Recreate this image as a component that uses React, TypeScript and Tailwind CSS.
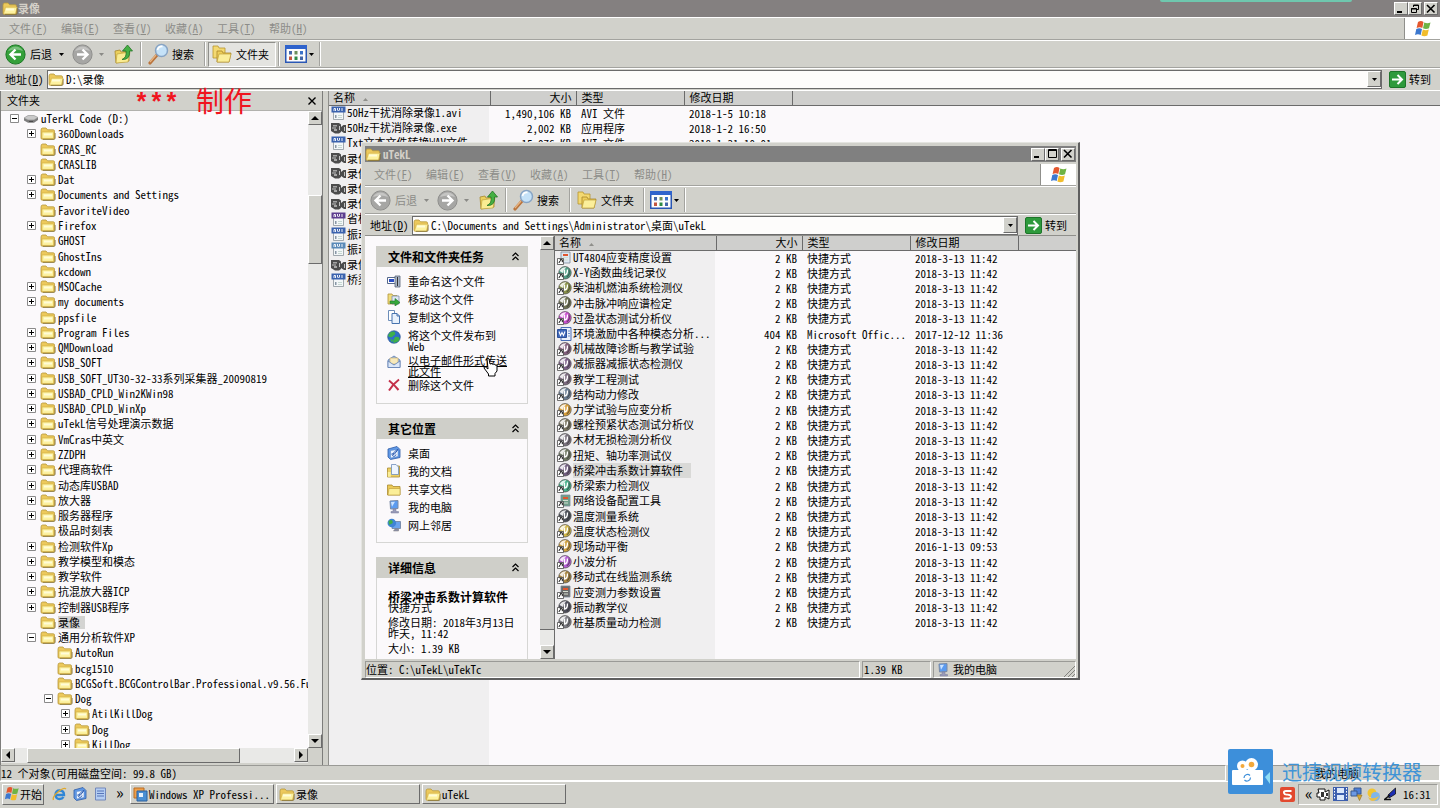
import type { ReactNode } from 'react'
import clsx from 'clsx'

const RAISED =
  'border border-t-white border-l-white border-r-[#6b6b6b] border-b-[#6b6b6b] bg-[#d1d1cb]'
const SUNKEN =
  'border border-t-[#9a9a96] border-l-[#9a9a96] border-r-white border-b-white'

const MENUS = ['文件(F)', '编辑(E)', '查看(V)', '收藏(A)', '工具(T)', '帮助(H)']

type Expand = '+' | '-' | ''

interface TreeNode {
  name: string
  level: number
  expand: Expand
  selected?: boolean
}

const node = (name: string, expand: Expand = '', level = 1, selected = false): TreeNode => ({
  name,
  level,
  expand,
  selected,
})

const TREE: TreeNode[] = [
  node('uTerkL Code (D:)', '-', 0),
  node('360Downloads', '+'),
  node('CRAS_RC'),
  node('CRASLIB'),
  node('Dat', '+'),
  node('Documents and Settings', '+'),
  node('FavoriteVideo'),
  node('Firefox', '+'),
  node('GHOST'),
  node('GhostIns'),
  node('kcdown'),
  node('MSOCache', '+'),
  node('my documents', '+'),
  node('ppsfile'),
  node('Program Files', '+'),
  node('QMDownload', '+'),
  node('USB_SOFT', '+'),
  node('USB_SOFT_UT30-32-33系列采集器_20090819', '+'),
  node('USBAD_CPLD_Win2KWin98', '+'),
  node('USBAD_CPLD_WinXp', '+'),
  node('uTekL信号处理演示数据', '+'),
  node('VmCras中英文', '+'),
  node('ZZDPH', '+'),
  node('代理商软件', '+'),
  node('动态库USBAD', '+'),
  node('放大器', '+'),
  node('服务器程序', '+'),
  node('极品时刻表'),
  node('检测软件Xp', '+'),
  node('教学模型和模态', '+'),
  node('教学软件', '+'),
  node('抗混放大器ICP', '+'),
  node('控制器USB程序', '+'),
  node('录像', '', 1, true),
  node('通用分析软件XP', '-'),
  node('AutoRun', '', 2),
  node('bcg1510', '', 2),
  node('BCGSoft.BCGControlBar.Professional.v9.56.Full', '', 2),
  node('Dog', '-', 2),
  node('AtilKillDog', '+', 3),
  node('Dog', '+', 3),
  node('KillDog', '+', 3),
]

const INDENT = ['pl-[9px]', 'pl-[26px]', 'pl-[43px]', 'pl-[60px]']

interface FileRow {
  icon: ReactNode
  name: string
  size: string
  type: string
  date: string
  selected?: boolean
}

/* ---------- icons ---------- */

function Folder({ open = false }: { open?: boolean }) {
  return (
    <svg className="h-[13px] w-4 shrink-0" viewBox="0 0 16 13">
      <path d="M1 3.2Q1 1 2.6 1H6l1.6 1.8h5.6q1.3 0 1.3 1.3V11q0 1.2-1.2 1.2H2.2Q1 12.200 1 11z" fill="#ecc95c" stroke="#b6983c" strokeWidth=".8" />
      <path d={open ? 'M3.500 5.200h11.700l-1.800 6.800H1.500z' : 'M2 5h11.600v6.400H2z'} fill="#fdf2a0" stroke="#d0ab42" strokeWidth=".6" />
      <path d="M4 6.500h8v2H4z" fill="#fffcd8" />
      <path d="M3 12.400h11.200q1-.3 1-1.400V6" fill="none" stroke="#7d6c34" strokeWidth=".7" />
    </svg>
  )
}

function Drive() {
  return (
    <svg className="h-[13px] w-4 shrink-0" viewBox="0 0 16 13">
      <path d="M1 6l4-2.500h6l4 2-4 2.500H5z" fill="#c9c9c9" stroke="#8b8b8b" strokeWidth=".6" />
      <path d="M1 6l4 2h6l4-2.500v2.600L11 10.800H5L1 8.500z" fill="#7d7d7d" />
      <path d="M6 9h4v1H6z" fill="#4a4a4a" />
    </svg>
  )
}

function NavArrow({ dir, green }: { dir: 'left' | 'right'; green?: boolean }) {
  return (
    <svg className="size-[21px] shrink-0" viewBox="0 0 21 21">
      <circle cx="10.500" cy="10.500" r="9.600" fill={green ? '#35a03a' : '#a6a6a4'} stroke={green ? '#1d7a26' : '#8f8f8d'} />
      <path d="M3 7a8.500 8.500 0 0 1 15 0q-7-3-15 0z" fill="#fff" opacity=".35" />
      <path
        d={dir === 'left' ? 'M16 10.500H6M10.500 5.500l-5 5 5 5' : 'M5 10.500h10M10.500 5.500l5 5-5 5'}
        fill="none"
        stroke="#fff"
        strokeWidth="2.400"
      />
    </svg>
  )
}

function UpFolder() {
  return (
    <svg className="size-5 shrink-0" viewBox="0 0 20 20">
      <path d="M1 7l5-1 1 2 8-1v10l-13 2z" fill="#ecd05c" stroke="#a8892c" strokeWidth=".8" />
      <path d="M3 10l13-2-2 10-12 1z" fill="#faec92" stroke="#b99a35" strokeWidth=".6" />
      <path d="M8 15.500q5-2 4-8.500H8.500l5-6 5 6h-3q1 9-7.500 8.500z" fill="#46b044" stroke="#237326" strokeWidth=".8" />
    </svg>
  )
}

function SearchIcon() {
  return (
    <svg className="size-[22px] shrink-0" viewBox="0 0 22 22">
      <path d="M2 20l7-8" stroke="#b9743d" strokeWidth="3.200" strokeLinecap="round" />
      <path d="M2 19l6-7" stroke="#e7b583" strokeWidth="1.200" />
      <circle cx="13.500" cy="7.500" r="6" fill="#c5e2f8" stroke="#87a4c4" strokeWidth="1.500" />
      <path d="M9.500 7q1-4 5-3.500" fill="none" stroke="#fff" strokeWidth="1.800" />
    </svg>
  )
}

function FoldersIcon() {
  return (
    <svg className="size-5 shrink-0" viewBox="0 0 20 20">
      <path d="M1 2h5l1 2h6v10H1z" fill="#f3d971" stroke="#b6962f" strokeWidth=".8" />
      <path d="M5 7h5l1 2h8l-2 9H5z" fill="#eecf5a" stroke="#a8872b" strokeWidth=".8" />
      <path d="M7 10h12l-2 8H5z" fill="#fbee9a" stroke="#b6962f" strokeWidth=".6" />
    </svg>
  )
}

function ViewsIcon() {
  return (
    <svg className="h-[18px] w-[22px] shrink-0" viewBox="0 0 22 18">
      <path d="M.75.75h20.500v16.500H.75z" fill="#fdfdfd" stroke="#2a57b4" strokeWidth="1.500" />
      <path d="M0 0h22v4H0z" fill="#2f63cc" />
      <path d="M4 6h3v3.500H4zM15 11.500h3V15h-3z" fill="#4467a8" />
      <path d="M9.500 6h3v3.500h-3z" fill="#6d8f5a" />
      <path d="M15 6h3v3.500h-3z" fill="#3b72c9" />
      <path d="M4 11.500h3V15H4z" fill="#c3553f" />
      <path d="M9.500 11.500h3V15h-3z" fill="#2e8b45" />
    </svg>
  )
}

function Flag({ size = 'size-[18px]' }: { size?: string }) {
  return (
    <svg className={clsx('shrink-0', size)} viewBox="0 0 18 18">
      <path d="M4 2q3-2 5.500 0L8.300 8Q6 6.300 2.600 8z" fill="#e4572e" />
      <path d="M10.300 2.400q3 1.600 6.200 0L15 8.300q-3 1.600-6 0z" fill="#6fb344" />
      <path d="M2.300 9q3-1.700 5.700 0l-1.300 6Q4 13.400 1 15z" fill="#3c78cf" />
      <path d="M8.800 9.400q3 1.600 6 0L13.400 15.400q-3 1.500-6 0z" fill="#f2bd2b" />
    </svg>
  )
}

function GoIcon() {
  return (
    <svg className="size-[17px] shrink-0" viewBox="0 0 17 17">
      <rect x=".5" y=".5" width="16" height="16" rx="1.500" fill="#2e9a3c" stroke="#1d7529" />
      <path d="M3 8.500h10M8.500 4l4.500 4.500L8.500 13" fill="none" stroke="#fff" strokeWidth="2" />
    </svg>
  )
}

function Clip({ tone }: { tone: string }) {
  return (
    <svg className="h-[14px] w-[15px] shrink-0" viewBox="0 0 15 14">
      <path d="M2.500 4h10v9.500h-10z" fill="#f3f6f8" stroke="#8b949c" strokeWidth=".8" />
      <path d="M.5.500h14v6H.5z" fill={tone} />
      <path d="M3 5V2.500h1.500V5M6.500 2v2l1 1 1-1V2M11 2v3" stroke="#fff" strokeWidth=".9" fill="none" />
      <path d="M4 9h1.500v3H4z" fill="#8796a5" />
      <path d="M7 9.500h4M7 11.500h4" stroke="#b9cfc6" strokeWidth=".8" />
    </svg>
  )
}

function Camera() {
  return (
    <svg className="h-[14px] w-[15px] shrink-0" viewBox="0 0 15 14">
      <path d="M0 2h8l2 1.500V6l2.500-2H15v8h-2l-3-2v1l-2 1.500H4L0 10z" fill="#4c4c4c" />
      <path d="M2 4h4v1.500H2zM3 8h3v2H3z" fill="#a5a5a5" />
      <path d="M1 7h4M8.500 5v4M13.500 6v4" stroke="#d0d0d0" strokeWidth=".9" />
    </svg>
  )
}

function Gauge({ color }: { color: string }) {
  return (
    <svg className="h-[14px] w-[15px] shrink-0" viewBox="0 0 15 14">
      <circle cx="8" cy="6.800" r="6.200" fill={color} stroke="#4a4a4a" strokeWidth=".7" />
      <path d="M2.500 5Q4.500 .8 9.500 1.200 6.500 3 6 7z" fill="#fff" opacity=".85" />
      <path d="M7.500 3.500v5.500q3 0 3-5.500" fill="none" stroke="#fff" strokeWidth="1.400" />
      <path d="M11.800 3.500q2 4-2 7.500" fill="none" stroke="#333" strokeWidth="1.200" opacity=".6" />
      <path d="M.5 7.500h6v6h-6z" fill="#fff" stroke="#333" strokeWidth=".7" />
      <path d="M2 12q0-2 2-2.500M2.800 8.700h2.500v2.500" fill="none" stroke="#111" />
    </svg>
  )
}

function SmallApp({ color }: { color: string }) {
  return (
    <svg className="h-[14px] w-[15px] shrink-0" viewBox="0 0 15 14">
      <path d="M4 1h9v11H4z" fill={color} stroke="#7b8a99" strokeWidth=".8" />
      <path d="M6 6.500h5M6 9h5" stroke="#d5ded0" />
      <path d="M6 3h5v2H6z" fill="#e0552f" />
      <path d="M.5 7.500h6v6h-6z" fill="#fff" stroke="#333" strokeWidth=".7" />
      <path d="M2 12q0-2 2-2.500M2.800 8.700h2.500v2.500" fill="none" stroke="#111" />
    </svg>
  )
}

function WordIcon() {
  return (
    <svg className="h-[14px] w-[15px] shrink-0" viewBox="0 0 15 14">
      <path d="M4 .5h10v13H4z" fill="#e9f0fb" stroke="#4a6db5" />
      <path d="M.5 2.500h9v8h-9z" fill="#3f68ba" stroke="#2c4f98" />
      <path d="M2 4.500l1.500 4L5 5.500l1.500 3 1.500-4" fill="none" stroke="#fff" strokeWidth="1.100" />
      <path d="M11 4h2M11 6.500h2M11 9h2" stroke="#6f8fcb" />
    </svg>
  )
}

function TaskIcon({ kind }: { kind: string }) {
  return (
    <svg className="size-[14px] shrink-0" viewBox="0 0 14 14">
      {kind === 'rename' && (
        <>
          <path d="M.5 3.500h9v6h-9z" fill="#fff" stroke="#55678a" />
          <path d="M2 5h5v3H2z" fill="#2a4cc4" />
          <path d="M8 2h5v11H8z" fill="#a8b4c6" stroke="#5a6678" strokeWidth=".8" />
          <path d="M10.500 3v9" stroke="#333" />
        </>
      )}
      {kind === 'move' && (
        <>
          <path d="M1 2h4l1 1.500h4V12H1z" fill="#f0dc7c" stroke="#b2963a" strokeWidth=".8" />
          <path d="M5 4h7v8H5z" fill="#dfe8f5" stroke="#7f8ea8" strokeWidth=".8" />
          <path d="M3 9h5V6.500l5 4-5 3.500v-2.500H3z" fill="#35a83b" stroke="#1f7326" strokeWidth=".6" />
        </>
      )}
      {kind === 'copy' && (
        <>
          <path d="M1.500.500h6v10h-6z" fill="#fff" stroke="#6d8db9" />
          <path d="M5 3.500h5l2.500 2.500v7.500H5z" fill="#e8f1fc" stroke="#4773ae" />
          <path d="M10 3.500V6h2.500" fill="none" stroke="#4773ae" />
        </>
      )}
      {kind === 'web' && (
        <>
          <circle cx="7" cy="7" r="6.300" fill="#2f6fc7" stroke="#214a85" strokeWidth=".6" />
          <path d="M3 2.500q4-2 5 0T6 6q-1 2-3.500 1T2 4zM8 7q4-1 4.500 1.500T8.500 12.500 8 7zM3 9l3 1-1 2.500z" fill="#3eb04a" />
        </>
      )}
      {kind === 'mail' && (
        <>
          <path d="M1 5l6-4 6 4v7.500H1z" fill="#9db9e2" stroke="#5f7fb2" strokeWidth=".8" />
          <path d="M3 3h8v6H3z" fill="#f7e9bb" stroke="#c8a763" strokeWidth=".6" />
          <path d="M1 6l6 4 6-4v6.500H1z" fill="#dbe7f8" stroke="#5f7fb2" strokeWidth=".8" />
        </>
      )}
      {kind === 'delete' && <path d="M2 2.500q5 4 9.500 9.500M12 1.500Q6 6 2 12.500" fill="none" stroke="#c4304a" strokeWidth="2" />}
      {kind === 'desktop' && (
        <>
          <path d="M1 3l9-2.500 3 3v8L3.500 13.500 1 11z" fill="#5f98e6" stroke="#2d5ba6" strokeWidth=".8" />
          <path d="M3.500 4.500l7.500-1v7L3.500 12z" fill="#eef5ff" stroke="#4b7cc4" strokeWidth=".5" />
          <path d="M5.500 7a2 2 0 1 0 3.500 1.500M9.500 4l1.500-.5-3.500 4.500-1.500.500.500-1.500z" fill="none" stroke="#2a5ab0" />
        </>
      )}
      {kind === 'docs' && (
        <>
          <path d="M.5 4h4l1-2h7v11H.5z" fill="#edd065" stroke="#a98a31" strokeWidth=".8" />
          <path d="M4.500.500H9L11.500 3v7.500h-7z" fill="#eef5ff" stroke="#6f8ebd" strokeWidth=".8" />
          <path d="M.8 8h3v4.800h-3z" fill="#fbee97" />
        </>
      )}
      {kind === 'shared' && (
        <>
          <path d="M.5 3h4.500l1 1.500h7V13H.5z" fill="#ebc956" stroke="#a98a31" strokeWidth=".8" />
          <path d="M2 6.500h11V13H1z" fill="#fbee97" stroke="#bd9b37" strokeWidth=".6" />
        </>
      )}
      {kind === 'computer' && (
        <>
          <path d="M3 1l8-.5v8L3.500 9z" fill="#5b9bf0" stroke="#7a8aa5" />
          <path d="M4 2l4-.3-3 5z" fill="#cbe3ff" />
          <path d="M6 9h3v2.500h2.500V13H4v-1.500h2z" fill="#9a9cba" stroke="#777a99" strokeWidth=".5" />
        </>
      )}
      {kind === 'network' && (
        <>
          <path d="M5 3.500h8.500v7H5z" fill="#6aa2ec" stroke="#6d7f9c" strokeWidth=".8" />
          <circle cx="4.800" cy="5" r="4.300" fill="#3f84d4" />
          <path d="M1.500 3q3-2 4 0T4 6 2 7z" fill="#40ad4d" />
          <path d="M8 11h3.500v2H6.500z" fill="#8f93ae" stroke="#777" strokeWidth=".5" />
        </>
      )}
    </svg>
  )
}

function Caret({ muted }: { muted?: boolean }) {
  return (
    <svg className={clsx('h-[3px] w-[5px] shrink-0', muted ? 'text-[#8a8a86]' : 'text-black')} viewBox="0 0 5 3">
      <path d="M0 0h5L2.500 3z" fill="currentColor" />
    </svg>
  )
}

/* ---------- data ---------- */

const gauge = (name: string, color: string, date = '2018-3-13 11:42', selected = false): FileRow => ({
  icon: <Gauge color={color} />,
  name,
  size: '2 KB',
  type: '快捷方式',
  date,
  selected,
})

const SHORTCUTS: FileRow[] = [
  { ...gauge('UT4804应变精度设置', ''), icon: <SmallApp color="#dde8f4" /> },
  gauge('X-Y函数曲线记录仪', '#4f9f86'),
  gauge('柴油机燃油系统检测仪', '#8a9248'),
  gauge('冲击脉冲响应谱检定', '#6f7352'),
  gauge('过盈状态测试分析仪', '#cc4fd0'),
  {
    icon: <WordIcon />,
    name: '环境激励中各种模态分析...',
    size: '404 KB',
    type: 'Microsoft Offic...',
    date: '2017-12-12 11:36',
  },
  gauge('机械故障诊断与教学试验', '#84607e'),
  gauge('减振器减振状态检测仪', '#7d5f8a'),
  gauge('教学工程测试', '#7d6a80'),
  gauge('结构动力修改', '#6b7f96'),
  gauge('力学试验与应变分析', '#dba03a'),
  gauge('螺栓预紧状态测试分析仪', '#78745f'),
  gauge('木材无损检测分析仪', '#7c7480'),
  gauge('扭矩、轴功率测试仪', '#6f7a62'),
  gauge('桥梁冲击系数计算软件', '#735f82', '2018-3-13 11:42', true),
  gauge('桥梁索力检测仪', '#45b08a'),
  { ...gauge('网络设备配置工具', ''), icon: <SmallApp color="#6f9f8a" /> },
  gauge('温度测量系统', '#4a4f58'),
  gauge('温度状态检测仪', '#d4b948'),
  gauge('现场动平衡', '#cf9f3a', '2016-1-13 09:53'),
  gauge('小波分析', '#b85fd8'),
  gauge('移动式在线监测系统', '#a8853f'),
  { ...gauge('应变测力参数设置', ''), icon: <SmallApp color="#6a6a6a" /> },
  gauge('振动教学仪', '#4f4f5c'),
  gauge('桩基质量动力检测', '#7f7f86'),
]

const avi = <Clip tone="#3a62ae" />
const RECORDINGS: FileRow[] = [
  { icon: avi, name: '50Hz干扰消除录像1.avi', size: '1,490,106 KB', type: 'AVI 文件', date: '2018-1-5 10:18' },
  { icon: <Camera />, name: '50Hz干扰消除录像.exe', size: '2,002 KB', type: '应用程序', date: '2018-1-2 16:50' },
  { icon: avi, name: 'Txt文本文件转换WAV文件', size: '15,076 KB', type: 'AVI 文件', date: '2018-1-31 10:01' },
  { icon: <Camera />, name: '录像', size: '', type: '', date: '' },
  { icon: <Camera />, name: '录像', size: '', type: '', date: '' },
  { icon: <Camera />, name: '录像', size: '', type: '', date: '' },
  { icon: <Camera />, name: '录像', size: '', type: '', date: '' },
  { icon: <Clip tone="#5d3d8f" />, name: '省标', size: '', type: '', date: '' },
  { icon: avi, name: '振动', size: '', type: '', date: '' },
  { icon: <Clip tone="#5b8ab8" />, name: '振动', size: '', type: '', date: '' },
  { icon: <Camera />, name: '录像', size: '', type: '', date: '' },
  { icon: avi, name: '桥梁', size: '', type: '', date: '' },
]

/* ---------- shared chrome ---------- */

function CaptionButtons({ restore }: { restore?: boolean }) {
  const cls = clsx(RAISED, 'flex h-[13px] w-[14px] items-center justify-center')
  return (
    <div className="flex">
      <button aria-label="最小化" className={cls}>
        <svg className="size-[10px]" viewBox="0 0 10 10"><path d="M1 8h5" stroke="#000" strokeWidth="2" /></svg>
      </button>
      <button aria-label="最大化" className={cls}>
        <svg className="size-[10px]" viewBox="0 0 10 10">
          {restore ? (
            <path d="M3.500 3V1h5v4.500H7M3 1.500h6M1.500 4.500h5v4h-5zM1 5h6" fill="none" stroke="#000" />
          ) : (
            <path d="M1.500.500h8v8h-8zM1 1.500h9" fill="none" stroke="#000" />
          )}
        </svg>
      </button>
      <button aria-label="关闭" className={clsx(cls, 'ml-[2px]')}>
        <svg className="size-[10px]" viewBox="0 0 10 10"><path d="M1 1l7.500 7.500M8.500 1L1 8.500" stroke="#000" strokeWidth="1.600" /></svg>
      </button>
    </div>
  )
}

function MenuBar() {
  return (
    <div className="flex h-[22px] shrink-0 border-b border-[#a3a39f]">
      <nav className="flex flex-1 items-center pl-[9px] text-[#8c8c88]">
        {MENUS.map((m) => (
          <button key={m} className="w-[52px] text-left whitespace-nowrap">
            {m.slice(0, 3)}
            <u>{m[3]}</u>
            {m.slice(4)}
          </button>
        ))}
      </nav>
      <div className="flex w-9 items-center justify-center border-l border-[#8f8f8b] bg-white">
        <Flag />
      </div>
    </div>
  )
}

function Divider() {
  return <div className="mx-[2px] h-full w-[2px] border-l border-r border-l-[#a3a39f] border-r-white" />
}

function Toolbar({ history, pressed }: { history?: boolean; pressed?: boolean }) {
  return (
    <div className="flex h-[28px] shrink-0 items-center border-t border-b border-t-white border-b-[#a3a39f] py-px pl-[5px]">
      <button className={clsx('flex items-center gap-1', !history && 'text-[#8c8c88]')}>
        <NavArrow dir="left" green={history} />
        <span className="w-[25px] text-left">后退</span>
        <Caret muted={!history} />
      </button>
      <button aria-label="前进" className="ml-2 flex items-center gap-[6px]">
        <NavArrow dir="right" />
        <Caret muted />
      </button>
      <button aria-label="向上" className="mr-1 ml-[10px]"><UpFolder /></button>
      <Divider />
      <button className="mr-2 ml-1 flex items-center gap-[2px]">
        <SearchIcon />
        搜索
      </button>
      <Divider />
      <button
        className={clsx(
          'flex h-[25px] items-center gap-1 border px-[3px] pr-[6px]',
          pressed ? 'border-t-[#8f8f8b] border-l-[#8f8f8b] border-r-white border-b-white bg-[#e4e4e0]' : 'border-transparent',
        )}
      >
        <FoldersIcon />
        文件夹
      </button>
      <Divider />
      <button aria-label="查看方式" className="mr-[3px] ml-[3px] flex items-center gap-[2px]">
        <ViewsIcon />
        <Caret />
      </button>
      <Divider />
    </div>
  )
}

function AddressBar({ id, path }: { id: string; path: string }) {
  return (
    <div className="flex h-[21px] shrink-0 items-center border-t border-t-white">
      <label htmlFor={id} className="w-[47px] pl-[5px] whitespace-nowrap">
        地址(<u>D</u>)
      </label>
      <div className="flex h-[19px] flex-1 items-center border border-[#6b6b6b] bg-[#fdfcfb]">
        <Folder open />
        <input id={id} defaultValue={path} className="min-w-0 flex-1 bg-transparent pl-[2px] outline-none" />
        <button aria-label="展开地址" className={clsx(RAISED, 'flex h-[16px] w-[14px] items-center justify-center')}>
          <Caret />
        </button>
      </div>
      <button className="flex items-center gap-[3px] pr-[9px] pl-[7px]">
        <GoIcon />
        转到
      </button>
    </div>
  )
}

function ArrowButton({ dir }: { dir: 'up' | 'down' | 'left' | 'right' }) {
  const d = { up: 'M0 6h8L4 2z', down: 'M0 2h8L4 6z', left: 'M6 0v8L2 4z', right: 'M2 0v8l4-4z' }[dir]
  return (
    <button aria-label={dir} className={clsx(RAISED, 'flex size-[14px] shrink-0 items-center justify-center')}>
      <svg className="size-2" viewBox="0 0 8 8"><path d={d} /></svg>
    </button>
  )
}

const HEAD =
  'h-[14px] border-r border-b border-r-[#6b6b6b] border-b-[#6b6b6b] bg-[#cfcfcd] p-0 align-top font-normal leading-[12px]'

function FileTable({ rows, height }: { rows: FileRow[]; height: string }) {
  return (
    <div className="min-h-0 min-w-0 flex-1 overflow-hidden bg-[linear-gradient(to_right,#f0eff0_160px,#fbf9fb_160px)]">
      <table className={clsx('w-full table-fixed border-collapse leading-[14px]', height)}>
        <colgroup>
          <col className="w-[161px]" />
          <col className="w-[86px]" />
          <col className="w-[108px]" />
          <col className="w-[108px]" />
          <col />
        </colgroup>
        <thead>
          <tr className="h-[14px]">
            <th className={clsx(HEAD, 'pl-1 text-left')}>
              名称
              <svg className="ml-2 inline h-[3px] w-[5px]" viewBox="0 0 5 3"><path d="M0 3h5L2.500 0z" fill="#8f8f8b" /></svg>
            </th>
            <th className={clsx(HEAD, 'pr-1 text-right')}>大小</th>
            <th className={clsx(HEAD, 'pl-[5px] text-left')}>类型</th>
            <th className={clsx(HEAD, 'pl-[5px] text-left')}>修改日期</th>
            <th className="border-b border-[#6b6b6b] bg-[#cfcfcd]" />
          </tr>
        </thead>
        <tbody className="align-top">
          {rows.map((r, i) => (
            <tr key={i}>
              <td className="p-0">
                <div className="flex h-[14px] items-center gap-px pl-[2px]">
                  {r.icon}
                  <span className={clsx('h-[15px] leading-[15px] whitespace-nowrap', r.selected && 'bg-[#d9d9d7] pr-2')}>
                    {r.name}
                  </span>
                </div>
              </td>
              <td className="p-0 pr-[5px] text-right whitespace-nowrap">{r.size}</td>
              <td className="p-0 pl-[5px] whitespace-nowrap">{r.type}</td>
              <td className="p-0 pl-[5px] whitespace-nowrap">{r.date}</td>
              <td className="p-0" />
            </tr>
          ))}
        </tbody>
      </table>
    </div>
  )
}

/* ---------- folder tree ---------- */

function FolderTree() {
  return (
    <aside className="flex w-[323px] shrink-0 flex-col border-r border-l border-[#7d7d7b]">
      <div className="flex h-5 shrink-0 items-center justify-between border-b border-[#b1b1ad] px-[6px]">
        <h2>文件夹</h2>
        <button aria-label="关闭文件夹栏">
          <svg className="size-2" viewBox="0 0 8 8"><path d="M.5.500l7 7M7.500.500l-7 7" stroke="#000" strokeWidth="1.400" /></svg>
        </button>
      </div>
      <div className="flex min-h-0 flex-1">
        <div className="min-w-0 flex-1 overflow-hidden bg-[#fbf9fb]">
          <ul className="flex h-[641px] flex-col">
            {TREE.map((n, i) => (
              <li key={i} className={clsx('flex min-h-0 flex-1 items-center', INDENT[n.level])}>
                {n.expand ? (
                  <button aria-label={n.expand === '+' ? '展开' : '折叠'} className="mr-1 size-[9px] shrink-0">
                    <svg className="size-[9px]" viewBox="0 0 9 9">
                      <path d="M.5.500h8v8h-8z" fill="#fff" stroke="#8a8a8a" />
                      <path d={n.expand === '+' ? 'M2 4.500h5M4.500 2v5' : 'M2 4.500h5'} stroke="#000" />
                    </svg>
                  </button>
                ) : (
                  <span className="w-[13px] shrink-0" />
                )}
                {n.level === 0 ? <Drive /> : <Folder />}
                <span className={clsx('ml-[2px] whitespace-nowrap', n.selected && 'bg-[#d4d4d2] pr-[5px]')}>
                  {n.name}
                </span>
              </li>
            ))}
          </ul>
        </div>
        <div className="flex w-[14px] flex-col bg-[#e9e9e7]">
          <ArrowButton dir="up" />
          <div className="flex-[70]" />
          <div className={clsx(RAISED, 'flex-[67]')} />
          <div className="flex-[470]" />
          <ArrowButton dir="down" />
        </div>
      </div>
      <div className="flex h-[15px] shrink-0 bg-[#e9e9e7]">
        <ArrowButton dir="left" />
        <div className="w-3" />
        <div className={clsx(RAISED, 'w-[213px]')} />
        <div className="flex-1" />
        <ArrowButton dir="right" />
        <div className="w-[14px] bg-[#d1d1cb]" />
      </div>
      <div className="h-[2px] shrink-0" />
    </aside>
  )
}

/* ---------- front window ---------- */

function Panel({ title, children, className }: { title: string; children: ReactNode; className?: string }) {
  return (
    <section className="mb-[14px]">
      <div className="flex h-[21px] items-center justify-between bg-[#cfcfc9] pr-2 pl-3">
        <h3 className="text-xs font-bold">{title}</h3>
        <button aria-label="收起">
          <svg className="size-[9px]" viewBox="0 0 9 9">
            <path d="M1.500 4l3-3 3 3M1.500 8l3-3 3 3" fill="none" stroke="#000" strokeWidth="1.200" />
          </svg>
        </button>
      </div>
      <div className={clsx('border border-t-0 border-[#d6d6d4] pt-[5px]', className)}>{children}</div>
    </section>
  )
}

function TaskLink({ icon, children, tall, underline }: { icon: string; children: ReactNode; tall?: boolean; underline?: boolean }) {
  return (
    <a
      href="#"
      className={clsx(
        'flex gap-[7px] pl-[10px] leading-[11px]',
        tall ? 'h-[25px] items-start pt-1' : 'h-[18px] items-center',
        underline && 'underline',
      )}
    >
      <TaskIcon kind={icon} />
      <span>{children}</span>
    </a>
  )
}

function TaskPane() {
  return (
    <div className="w-[175px] shrink-0 overflow-hidden bg-[#fbf9fb] pt-[10px] pr-3 pl-[11px]">
      <Panel title="文件和文件夹任务" className="h-[137px]">
        <TaskLink icon="rename">重命名这个文件</TaskLink>
        <TaskLink icon="move">移动这个文件</TaskLink>
        <TaskLink icon="copy">复制这个文件</TaskLink>
        <TaskLink icon="web" tall>将这个文件发布到<br />Web</TaskLink>
        <TaskLink icon="mail" tall underline>以电子邮件形式传送<br />此文件</TaskLink>
        <TaskLink icon="delete">删除这个文件</TaskLink>
      </Panel>
      <Panel title="其它位置" className="h-[104px]">
        <TaskLink icon="desktop">桌面</TaskLink>
        <TaskLink icon="docs">我的文档</TaskLink>
        <TaskLink icon="shared">共享文档</TaskLink>
        <TaskLink icon="computer">我的电脑</TaskLink>
        <TaskLink icon="network">网上邻居</TaskLink>
      </Panel>
      <Panel title="详细信息" className="h-[104px] pl-[11px] leading-[11px] whitespace-nowrap">
        <p className="pt-2 text-xs leading-[11px] font-bold">桥梁冲击系数计算软件</p>
        <p>快捷方式</p>
        <p className="pt-1">修改日期: 2018年3月13日</p>
        <p>昨天, 11:42</p>
        <p className="pt-1">大小: 1.39 KB</p>
      </Panel>
    </div>
  )
}

function FrontWindow() {
  return (
    <div className="absolute top-[142px] left-[361px] flex h-[538px] w-[719px] flex-col border-t border-r-2 border-b-2 border-l border-t-[#e4e4e0] border-r-[#5f5f5f] border-b-[#5f5f5f] border-l-[#e4e4e0] bg-[#d1d1cb] pt-[3px] pr-[2px] pl-[3px]">
      <div className="mb-[2px] flex h-[16px] shrink-0 items-center justify-between bg-[#808080] pr-px">
        <div className="flex items-center gap-[2px] text-[#d4d0c8]">
          <Folder open />
          <span className="font-bold">uTekL</span>
        </div>
        <CaptionButtons />
      </div>
      <MenuBar />
      <Toolbar />
      <AddressBar id="front-address" path="C:\Documents and Settings\Administrator\桌面\uTekL" />
      <div className="flex min-h-0 flex-1 border-t border-[#8f8f8b]">
        <TaskPane />
        <div className="flex w-[15px] shrink-0 flex-col border-r border-[#6b6b6b] bg-[#e9e9e7]">
          <ArrowButton dir="up" />
          <div className="flex-1 border-b border-[#6b6b6b] bg-[#c9c9c6]" />
          <div className="h-[15px]" />
          <ArrowButton dir="down" />
        </div>
        <FileTable rows={SHORTCUTS} height="h-[395px]" />
      </div>
      <footer className="flex h-[19px] shrink-0 gap-[2px] pt-[2px]">
        <div className={clsx(SUNKEN, 'flex flex-1 items-center')}>位置: C:\uTekL\uTekTc</div>
        <div className={clsx(SUNKEN, 'flex w-[69px] items-center pl-px')}>1.39 KB</div>
        <div className={clsx(SUNKEN, 'flex w-[143px] items-center gap-[3px] pl-[2px]')}>
          <TaskIcon kind="computer" />
          <span className="flex-1">我的电脑</span>
          <svg className="size-3 self-end" viewBox="0 0 12 12"><path d="M1 12L12 1M5 12l7-7M9 12l3-3" stroke="#82827e" /></svg>
        </div>
      </footer>
    </div>
  )
}

function HandCursor() {
  return (
    <svg className="pointer-events-none absolute top-[357px] left-[483px] h-[20px] w-[15px]" viewBox="0 0 15 20">
      <path
        d="M4 1.500q1.500-1 2 .5l1 5 2-.5.500.800 2-.3.500 1 2 .2V14L12 16.500V19H5.500v-2L1 11q0-1.500 1.500-1l2.500 2z"
        fill="#fff"
        stroke="#000"
      />
    </svg>
  )
}

/* ---------- taskbar ---------- */

function TaskButton({ icon, children }: { icon: ReactNode; children: ReactNode }) {
  return (
    <button className={clsx(RAISED, 'flex h-5 w-[144px] items-center gap-px pl-[2px] whitespace-nowrap')}>
      {icon}
      {children}
    </button>
  )
}

function Taskbar() {
  return (
    <div className="flex h-[27px] shrink-0 items-center border-t border-white bg-[#d1d1cb] pr-[2px] pb-[2px] pl-[2px]">
      <button className={clsx(RAISED, 'flex h-[21px] w-[42px] items-center pl-px whitespace-nowrap')}>
        <Flag size="size-4" />
        开始
      </button>
      <div className="mr-1 ml-2 flex items-center gap-[6px]">
        <button aria-label="Internet Explorer">
          <svg className="size-[15px]" viewBox="0 0 15 15">
            <path d="M3.500 8h8.500q0-4.500-4.200-4.500T3.500 8q.3 4 4 4 2.800 0 4-2" fill="none" stroke="#2f86d6" strokeWidth="2.400" />
            <path d="M1.500 13Q0 10 6 5T14 2" fill="none" stroke="#e0a92c" strokeWidth="1.300" />
          </svg>
        </button>
        <button aria-label="显示桌面"><TaskIcon kind="desktop" /></button>
        <button aria-label="记事本" className="ml-[2px]">
          <svg className="h-[14px] w-[11px]" viewBox="0 0 11 14">
            <path d="M.5 1h10v12H.5z" fill="#b4cdf2" stroke="#7288bb" />
            <path d="M2 4h7M2 6.500h7M2 9h7" stroke="#5775b8" />
          </svg>
        </button>
      </div>
      <span className="w-5 pb-1 pl-[6px] text-base leading-3">»</span>
      <div className="flex gap-[2px]">
        <TaskButton
          icon={
            <svg className="size-[15px] shrink-0" viewBox="0 0 15 15">
              <path d="M1 1h10v10H1z" fill="#f0a04a" stroke="#b96c22" />
              <path d="M4 4h10v10H4z" fill="#4a8fd4" stroke="#2c609c" />
              <path d="M6 6h4v4H6z" fill="#e8f1fa" />
            </svg>
          }
        >
          Windows XP Professi...
        </TaskButton>
        <TaskButton icon={<Folder open />}>录像</TaskButton>
        <TaskButton icon={<Folder open />}>uTekL</TaskButton>
      </div>
      <div className="flex-1" />
      <svg className="mr-[3px] size-[15px]" viewBox="0 0 15 15">
        <rect width="15" height="15" rx="2" fill="#e2492f" />
        <path d="M11.500 4H6Q3.500 4 4 6t3.500 1.600Q11 8 11 9.500T9 11.500H3.500" fill="none" stroke="#fff" strokeWidth="1.900" />
      </svg>
      <div className={clsx(SUNKEN, 'flex h-[21px] w-[140px] items-center gap-[2px] pl-[6px]')}>
        <span className="w-[9px] pb-[2px] text-base leading-3">«</span>
        <svg className="h-[13px] w-[15px]" viewBox="0 0 15 13">
          <path d="M2 1h7v3l4-2v9l-4-2v3H4V9H1V5h2z" fill="#fff" stroke="#111" />
          <path d="M5 4h3v5H5zM10 5h2v3h-2z" fill="#333" />
        </svg>
        <svg className="h-[14px] w-[15px]" viewBox="0 0 15 14">
          <path d="M0 0h15v14H0z" fill="#3d5fae" />
          <path d="M4 1h7v5H4zM4 8h7v5H4z" fill="#dce8fa" />
          <path d="M1.500 1v12M13.500 1v12" stroke="#fff" strokeDasharray="1.500 1.500" />
        </svg>
        <svg className="size-[14px]" viewBox="0 0 14 14">
          <path d="M4 1h7v6H4z" fill="#4c7fd8" stroke="#39588e" />
          <path d="M1 4h6v5H1z" fill="#6b99e4" stroke="#39588e" />
          <path d="M7 8h5l-2.500 5.500z" fill="#d9a936" stroke="#8a6a1c" strokeWidth=".6" />
        </svg>
        <svg className="size-[15px]" viewBox="0 0 15 15">
          <circle cx="6" cy="6" r="4.500" fill="#f0c534" />
          <circle cx="9.500" cy="9.500" r="4.500" fill="#7fb5ea" />
          <path d="M2 10q5 3 11-1-2 5-7 5-3-1-4-4z" fill="#e8bf4b" />
        </svg>
        <svg className="size-[14px]" viewBox="0 0 14 14">
          <path d="M12.500 1v6L6 11l-1-3z" fill="#1d2fb4" stroke="#111" strokeWidth=".8" />
          <path d="M1 12.500h7M2 12l5-4" stroke="#111" strokeWidth="1.600" />
        </svg>
        <time className="ml-1">16:31</time>
      </div>
    </div>
  )
}

function Watermark() {
  return (
    <div className="absolute right-[18px] bottom-[14px] flex items-center gap-[9px]">
      <svg className="size-[45px]" viewBox="0 0 45 45">
        <rect width="45" height="45" rx="2" fill="#3d8fda" />
        <circle cx="14.500" cy="17" r="5.500" fill="#fff" />
        <circle cx="23.500" cy="15.500" r="6.500" fill="#fff" />
        <circle cx="14.500" cy="17" r="2" fill="#f3a93b" />
        <circle cx="23.500" cy="15.500" r="2.800" fill="#f3a93b" />
        <rect x="4" y="21" width="31" height="15" rx="1" fill="#fff" />
        <path d="M37 28l5-5v12z" fill="#8fdcf5" />
        <path d="M16 29a3.500 3.500 0 0 1 6-2.500M22.500 28.500a3.500 3.500 0 0 1-6 2.500" fill="none" stroke="#3d8fda" strokeWidth="1.200" />
      </svg>
      <span className="text-[20px] leading-6 font-medium text-[#3f94d6]">迅捷视频转换器</span>
    </div>
  )
}

export default function App() {
  return (
    <div className="relative flex h-screen flex-col overflow-hidden bg-[#d1d1cb] font-['Noto_Sans_Mono_CJK_SC','Noto_Sans_CJK_SC',monospace] text-[11px] leading-[13px] text-black">
      <div className="flex h-[17px] shrink-0 items-center justify-between bg-[#848080] px-[2px]">
        <div className="flex items-center text-[#d4d0c8]">
          <Folder open />
          <h1 className="font-bold">录像</h1>
        </div>
        <CaptionButtons restore />
      </div>
      <div className="flex flex-col border-t border-white">
        <MenuBar />
        <Toolbar history pressed />
        <AddressBar id="address" path="D:\录像" />
      </div>
      <div className="mt-px flex min-h-0 flex-1 border-t border-white">
        <FolderTree />
        <div className="w-[6px] shrink-0 border-r border-[#8f8f8b]" />
        <FileTable rows={RECORDINGS} height="h-[197px]" />
      </div>
      <footer className="flex h-[16px] shrink-0 gap-[2px]">
        <div className={clsx(SUNKEN, 'flex flex-1 items-center')}>12 个对象(可用磁盘空间: 99.8 GB)</div>
        <div className={clsx(SUNKEN, 'flex w-[212px] items-center pl-[86px]')}>我的电脑</div>
      </footer>
      <Taskbar />

      <div className="absolute top-0 right-[88px] h-[2px] w-[192px] rounded-b bg-[#6fc7ae]" />
      <p className="absolute top-[82px] left-[134px] flex items-center gap-[17px] text-[#f0141e]">
        <span className="pt-[10px] font-['Liberation_Mono',monospace] text-[25px] leading-[26px] font-bold">***</span>
        <span className="text-[28px] leading-[30px]">制作</span>
      </p>
      <FrontWindow />
      <HandCursor />
      <Watermark />
    </div>
  )
}
